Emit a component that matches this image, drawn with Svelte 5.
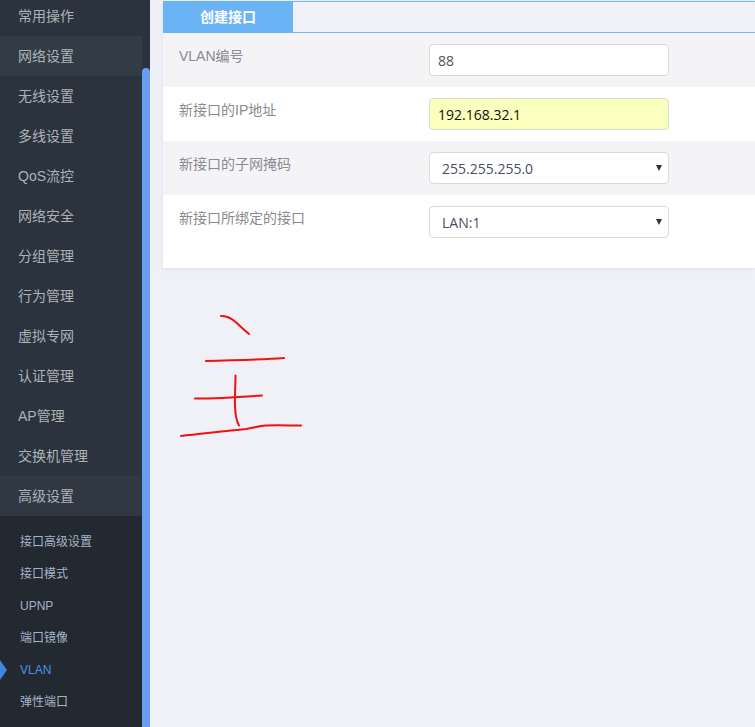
<script>
  const menu = ['常用操作', '网络设置', '无线设置', '多线设置', 'QoS流控', '网络安全', '分组管理', '行为管理', '虚拟专网', '认证管理', 'AP管理', '交换机管理', '高级设置'];
  const subMenu = ['接口高级设置', '接口模式', 'UPNP', '端口镜像', 'VLAN', '弹性端口'];
</script>

<div class="page">
  <aside class="sidebar">
    <nav class="nav">
      <ul class="menu">
        {#each menu as item}
          <li class:hover={item === '网络设置'} class:open={item === '高级设置'}>{item}</li>
        {/each}
      </ul>
      <ul class="sub">
        {#each subMenu as item}
          <li class:active={item === 'VLAN'}>{item}</li>
        {/each}
      </ul>
    </nav>
    <div class="track"><div class="thumb"></div></div>
  </aside>

  <main class="content">
    <section class="panel">
      <div class="tabs">
        <div class="tab">创建接口</div>
      </div>
      <div class="row">
        <div class="label"><span class="latin">VLAN</span>编号</div>
        <input class="field" value="88" />
      </div>
      <div class="row">
        <div class="label">新接口的<span class="latin">IP</span>地址</div>
        <input class="field autofill" value="192.168.32.1" />
      </div>
      <div class="row">
        <div class="label">新接口的子网掩码</div>
        <div class="select">
          <select class="field">
            <option>255.255.255.0</option>
          </select>
        </div>
      </div>
      <div class="row last">
        <div class="label">新接口所绑定的接口</div>
        <div class="select">
          <select class="field">
            <option>LAN:1</option>
          </select>
        </div>
      </div>
    </section>

    <svg class="scribble" width="160" height="150" viewBox="0 0 160 150" fill="none" stroke="#f01010" stroke-width="2" stroke-linecap="round" stroke-linejoin="round">
      <path d="M61 16c5 0 8 1 12 4s9 8 16 14" />
      <path d="M46 61c28-1 55-1 78-3" />
      <path d="M35 98.500c20 0 40-1 67-3" />
      <path d="M75.500 75.500c0 11-1 22-.5 31 .3 6 1 14 4 19" />
      <path d="M21 136c20-2 44-5 65-7 8-1 12-3 20-3.500 12-.5 24 0 35 0" />
    </svg>
  </main>
</div>

<style>
  :global(body) {
    margin: 0;
    background: #f0f1f6;
  }

  .page {
    display: flex;
    width: 755px;
    height: 727px;
    overflow: hidden;
    background: #f0f1f6;
    font-family: "Liberation Sans", "Noto Sans CJK SC", sans-serif;
    font-size: 14px;
  }

  .sidebar {
    display: flex;
    flex: none;
    width: 150px;
    height: 727px;
    overflow: hidden;
    background: #2b333e;
  }

  .nav {
    flex: none;
    width: 142px;
  }

  ul {
    margin: 0;
    padding: 0;
    list-style: none;
  }

  .menu {
    margin-top: -4px;
  }

  .menu li {
    height: 40px;
    padding-left: 18px;
    line-height: 40px;
    color: #aeb2b7;
  }

  .menu li.hover {
    background: #323c46;
  }

  .menu li.open {
    background: #2f3843;
  }

  .sub {
    height: 300px;
    padding-top: 10px;
    background: #222931;
  }

  .sub li {
    position: relative;
    height: 32px;
    padding-left: 20px;
    line-height: 32px;
    font-size: 12px;
    color: #a7b4c6;
  }

  .sub li.active {
    color: #4f8fe8;
  }

  .sub li.active::before {
    content: "";
    position: absolute;
    left: 0;
    top: 6px;
    width: 7px;
    height: 20px;
    background: #3f86e0;
    clip-path: polygon(0 0, 100% 50%, 0 100%);
  }

  .track {
    flex: none;
    width: 8px;
    padding-top: 68px;
  }

  .thumb {
    height: 100%;
    border-radius: 4px 4px 0 0;
    background: #6a9cf5;
  }

  .content {
    position: relative;
    flex: 1;
    min-width: 0;
    padding: 1px 0 0 13px;
  }

  .panel {
    background: #fff;
    box-shadow: 0 1px 4px #d8e2f6;
  }

  .tabs {
    height: 30px;
    border-top: 1px solid #7ab8f0;
    border-bottom: 1px solid #7ab8f0;
    background: #f0f1f6;
  }

  .tab {
    width: 130px;
    height: 32px;
    margin-top: -1px;
    text-align: center;
    line-height: 32px;
    font-weight: bold;
    color: #fff;
    background: #6ab4f5;
  }

  .row {
    display: flex;
    align-items: flex-start;
    height: 54px;
    box-sizing: border-box;
    padding: 11px 0 0 16px;
    background: #fff;
  }

  .row:nth-child(even) {
    background: #f4f4f7;
  }

  .row.last {
    height: 73px;
  }

  .label {
    flex: none;
    width: 250px;
    padding-top: 1px;
    line-height: 22px;
    color: #8a8a8f;
  }

  .latin {
    font-family: "Liberation Sans", sans-serif;
  }

  .field {
    display: block;
    box-sizing: border-box;
    width: 240px;
    height: 32px;
    margin: 0;
    padding: 0 8px;
    border: 1px solid #d9d9d9;
    border-radius: 4px;
    outline: none;
    background: #fff;
    font-family: "Open Sans", sans-serif;
    font-size: 14px;
    color: #555;
  }

  .field.autofill {
    background: #faffbd;
    color: #111;
  }

  .select {
    position: relative;
    width: 240px;
  }

  .select select {
    padding-left: 12px;
    appearance: none;
    color: #4a4f63;
  }

  .select::after {
    content: "";
    position: absolute;
    right: 7px;
    top: 13px;
    border-left: 3px solid transparent;
    border-right: 3px solid transparent;
    border-top: 6px solid #333;
  }

  .scribble {
    position: absolute;
    left: 10px;
    top: 300px;
  }
</style>
